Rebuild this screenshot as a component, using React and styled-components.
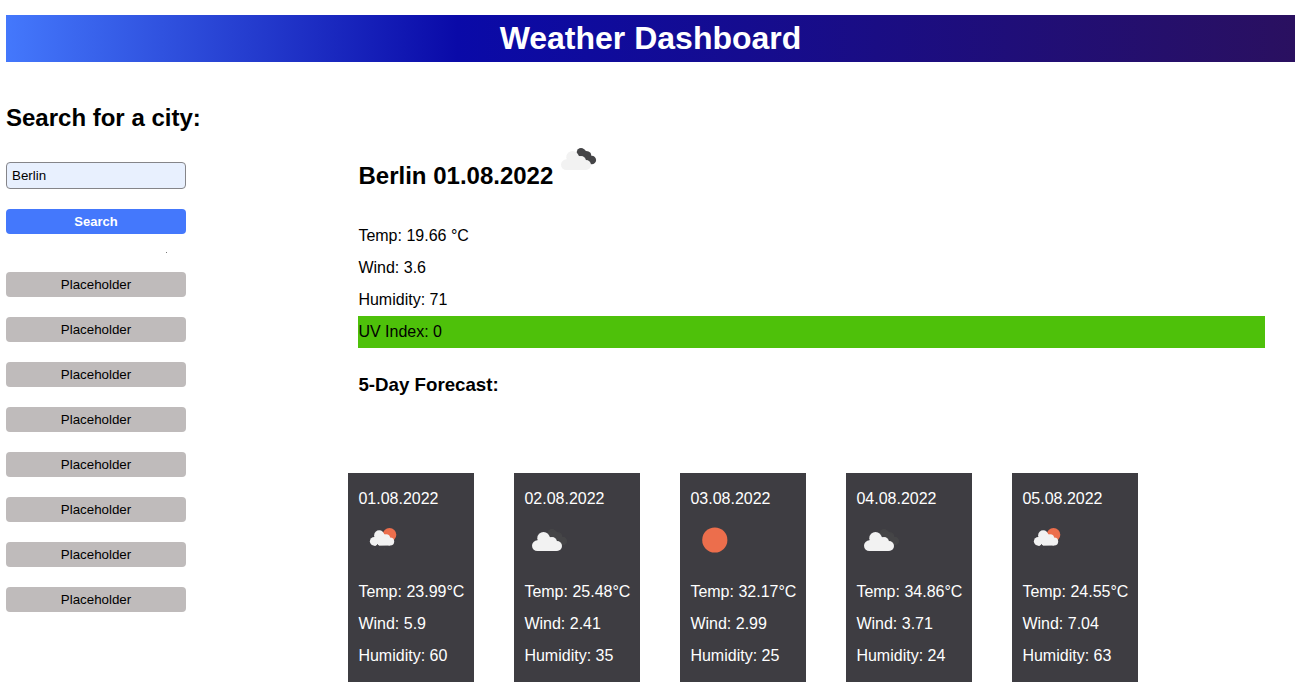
import React from "react";
import styled, { createGlobalStyle } from "styled-components";

const Global = createGlobalStyle`
  * { box-sizing: border-box; }
  html, body { margin: 0; background: #fff; color: #000; overflow: hidden; }
  body { font-family: "Liberation Sans", Arial, sans-serif; font-size: 16px; }
  h1, h2, h3, p { margin: 0; }
`;
const Page = styled.div`
  height: 699px;
  padding: 15px 5px 0 6px;
`;
const Header = styled.header`
  height: 47px;
  background: linear-gradient(90deg, #4478fc 0%, #0a0aa8 35%, #2a1060 100%);
  color: #fff;
  text-align: center;
`;
const Title = styled.h1`
  font-size: 32px;
  line-height: 46px;
`;
const Main = styled.main`
  display: flex;
`;
const Sidebar = styled.aside`
  width: 342px;
  flex: none;
  display: flex;
  flex-direction: column;
  align-items: flex-start;
  padding-top: 42px;
`;
const SearchTitle = styled.h2`
  font-size: 24px;
  line-height: 28px;
`;
const CityInput = styled.input`
  width: 180px;
  height: 27px;
  margin-top: 30px;
  padding: 0 5px;
  border: 1px solid #858589;
  border-radius: 4px;
  background: #e8f0fe;
  font: 13.333px "Liberation Sans", Arial, sans-serif;
`;
const Button = styled.button`
  width: 180px;
  height: 25px;
  padding: 0;
  border: 0;
  border-radius: 4px;
  margin-top: 20px;
  background: ${(p) => (p.$primary ? "#4478fc" : "#bfbbbb")};
  color: ${(p) => (p.$primary ? "#fff" : "#000")};
  font: ${(p) => (p.$primary ? "bold 13px" : "13.333px")} "Liberation Sans", Arial, sans-serif;
`;
const Speck = styled.span`
  width: 1px;
  height: 1px;
  margin: 18px 0 0 160px;
  background: #777;
`;
const History = styled.div`
  display: flex;
  flex-direction: column;
  margin-top: -1px;
`;
const Content = styled.section`
  flex: 1;
  padding-top: 72px;
`;
const Current = styled.div`
  margin: 0 30px 0 10px;
`;
const CityRow = styled.div`
  display: flex;
  height: 86px;
`;
const City = styled.h2`
  font-size: 24px;
  line-height: 28px;
  margin-top: 28px;
  padding-left: 0.5px;
`;
const Line = styled.p`
  line-height: 32px;
  white-space: nowrap;
  padding-left: 0.4px;
  background: ${(p) => p.$bg || "transparent"};
`;
const ForecastTitle = styled.h3`
  font-size: 18.72px;
  line-height: 22px;
  margin-top: 26px;
  padding-left: 0.4px;
`;
const Cards = styled.div`
  display: flex;
  gap: 40px;
  margin-top: 77px;
`;
const Card = styled.article`
  width: 126px;
  height: 209px;
  padding: 10px 0 0 10px;
  background: #3e3d42;
  color: #fff;
`;
const IconBox = styled.div`
  display: flex;
  height: 61px;
`;
const Icon = styled.svg`
  display: block;
  flex: none;
  margin-top: -1px;
`;

function Cloud(props) {
  return (
    <g fill="#f2f2f2" {...props}>
      <circle cx="19.5" cy="24.2" r="6.2" />
      <circle cx="13.4" cy="31.7" r="5.4" />
      <circle cx="28" cy="28" r="5" />
      <circle cx="33" cy="32" r="5" />
      <path d="M13.4 37.1V27l1-2 10-3 4 3 4.6 12z" />
    </g>
  );
}

function WeatherIcon({ kind }) {
  return (
    <Icon width="50" height="50" viewBox="0 0 50 50">
      {kind === "sun" && <circle cx="24.8" cy="26" r="12.6" fill="#ec6e4c" />}
      {kind === "clouds" && (
        <>
          <g fill="#454547">
            <circle cx="28" cy="19.2" r="4.3" />
            <circle cx="34" cy="22.5" r="4.3" />
            <circle cx="38.8" cy="27" r="4.3" />
            <path d="M24 19l6-3 8 5v10l-8-4z" />
          </g>
          <Cloud />
        </>
      )}
      {kind === "rain" && (
        <>
          <circle cx="31.5" cy="20.7" r="6.8" fill="#ec6e4c" />
          <Cloud transform="translate(5.4 1.6) scale(.81)" />
          <path d="M18.5 32l1-1.5 1 1.5zM17 34l-1 2M22 34l-1 2M27 34l-1 2" stroke="#444347" fill="#444347" />
        </>
      )}
    </Icon>
  );
}

const days = [
  ["01.08.2022", "rain", "23.99", "5.9", "60"],
  ["02.08.2022", "clouds", "25.48", "2.41", "35"],
  ["03.08.2022", "sun", "32.17", "2.99", "25"],
  ["04.08.2022", "clouds", "34.86", "3.71", "24"],
  ["05.08.2022", "rain", "24.55", "7.04", "63"],
];

export default function App() {
  return (
    <Page>
      <Global />
      <Header><Title>Weather Dashboard</Title></Header>
      <Main>
        <Sidebar>
          <SearchTitle>Search for a city:</SearchTitle>
          <CityInput defaultValue="Berlin" />
          <Button $primary>Search</Button>
          <Speck />
          <History>
            {Array.from({ length: 8 }, (_, i) => <Button key={i}>Placeholder</Button>)}
          </History>
        </Sidebar>
        <Content>
          <Current>
            <CityRow><City>Berlin 01.08.2022</City><WeatherIcon kind="clouds" /></CityRow>
            <Line>Temp: 19.66 °C</Line>
            <Line>Wind: 3.6</Line>
            <Line>Humidity: 71</Line>
            <Line $bg="#4ec10a">UV Index: 0</Line>
            <ForecastTitle>5-Day Forecast:</ForecastTitle>
          </Current>
          <Cards>
            {days.map(([date, kind, temp, wind, hum]) => (
              <Card key={date}>
                <Line>{date}</Line>
                <IconBox><WeatherIcon kind={kind} /></IconBox>
                <Line>Temp: {temp}°C</Line>
                <Line>Wind: {wind}</Line>
                <Line>Humidity: {hum}</Line>
              </Card>
            ))}
          </Cards>
        </Content>
      </Main>
    </Page>
  );
}
